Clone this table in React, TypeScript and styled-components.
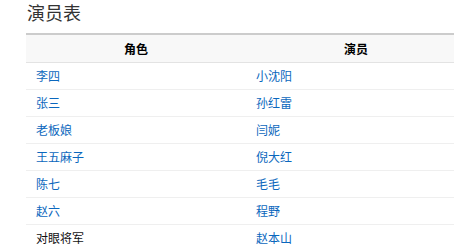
import React from "react";
import styled, { createGlobalStyle } from "styled-components";

const GlobalStyle = createGlobalStyle`
  body {
    margin: 0;
    background: #fff;
    font-family: "Noto Sans CJK SC", "Noto Sans", sans-serif;
    overflow: hidden;
  }
`;

const Page = styled.div`
  padding: 0 0 0 26px;
  width: 440px;
`;

const Title = styled.h2`
  margin: 0 0 9px 1px;
  font-size: 18px;
  font-weight: normal;
  line-height: 24px;
  color: #333;
`;

const Table = styled.table`
  width: 440px;
  border-collapse: collapse;
  border-top: 2px solid #cccccc;
  table-layout: fixed;
  font-size: 12px;
`;

const Th = styled.th`
  height: 27px;
  padding: 0 10px;
  background: #f8f8f8;
  border-bottom: 1px solid #e3e3e3;
  font-weight: bold;
  color: #000;
  text-align: center;
  line-height: 27px;
`;

const Td = styled.td`
  height: 26px;
  padding: 0 10px;
  border-bottom: 1px solid #efefef;
  line-height: 26px;
`;

const Link = styled.a<{ $plain?: boolean }>`
  color: ${(p) => (p.$plain ? "#111" : "#0b67bd")};
  text-decoration: none;
`;

const cast: [string, string, boolean?][] = [
  ["李四", "小沈阳"],
  ["张三", "孙红雷"],
  ["老板娘", "闫妮"],
  ["王五麻子", "倪大红"],
  ["陈七", "毛毛"],
  ["赵六", "程野"],
  ["对眼将军", "赵本山", true],
];

export default function App() {
  return (
    <Page>
      <GlobalStyle />
      <Title>演员表</Title>
      <Table>
        <thead>
          <tr>
            <Th>角色</Th>
            <Th>演员</Th>
          </tr>
        </thead>
        <tbody>
          {cast.map(([role, actor, plain]) => (
            <tr key={role}>
              <Td>
                <Link $plain={plain}>{role}</Link>
              </Td>
              <Td>
                <Link>{actor}</Link>
              </Td>
            </tr>
          ))}
        </tbody>
      </Table>
    </Page>
  );
}
